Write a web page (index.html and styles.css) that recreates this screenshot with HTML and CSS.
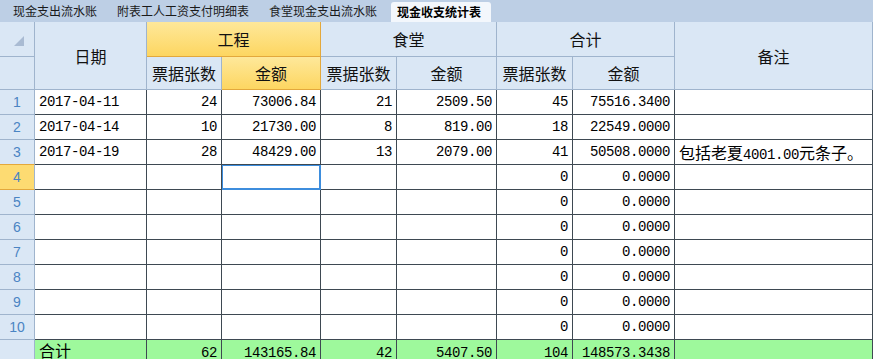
FILE: index.html
```html
<!DOCTYPE html>
<html lang="zh">
<head>
<meta charset="utf-8">
<title>现金收支统计表</title>
<link rel="stylesheet" href="styles.css">
</head>
<body>
<div class="tabs">
  <div class="tab">现金支出流水账</div>
  <div class="tab">附表工人工资支付明细表</div>
  <div class="tab">食堂现金支出流水账</div>
  <div class="tab active">现金收支统计表</div>
</div>
<table class="grid">
  <colgroup>
    <col class="c-rh"><col class="c-date"><col class="c-n1"><col class="c-a1"><col class="c-n2"><col class="c-a2"><col class="c-n3"><col class="c-a3"><col class="c-note">
  </colgroup>
  <thead>
    <tr class="h1">
      <th class="rh corner"><span class="tri"></span></th>
      <th class="hd" rowspan="2">日期</th>
      <th class="hd sel" colspan="2">工程</th>
      <th class="hd" colspan="2">食堂</th>
      <th class="hd" colspan="2">合计</th>
      <th class="hd last" rowspan="2">备注</th>
    </tr>
    <tr class="h2">
      <th class="rh"></th>
      <th class="hd">票据张数</th>
      <th class="hd sel">金额</th>
      <th class="hd">票据张数</th>
      <th class="hd">金额</th>
      <th class="hd">票据张数</th>
      <th class="hd">金额</th>
    </tr>
  </thead>
  <tbody>
    <tr><th class="rh">1</th><td class="t">2017-04-11</td><td class="n">24</td><td class="n a">73006.84</td><td class="n">21</td><td class="n">2509.50</td><td class="n">45</td><td class="n">75516.3400</td><td></td></tr>
    <tr><th class="rh">2</th><td class="t">2017-04-14</td><td class="n">10</td><td class="n a">21730.00</td><td class="n">8</td><td class="n">819.00</td><td class="n">18</td><td class="n">22549.0000</td><td></td></tr>
    <tr><th class="rh">3</th><td class="t">2017-04-19</td><td class="n">28</td><td class="n a">48429.00</td><td class="n">13</td><td class="n">2079.00</td><td class="n">41</td><td class="n">50508.0000</td><td class="t note">包括老夏<span class="mono">4001.00</span>元条子。</td></tr>
    <tr><th class="rh cur">4</th><td></td><td></td><td class="active-cell"></td><td></td><td></td><td class="n">0</td><td class="n">0.0000</td><td></td></tr>
    <tr><th class="rh">5</th><td></td><td></td><td></td><td></td><td></td><td class="n">0</td><td class="n">0.0000</td><td></td></tr>
    <tr><th class="rh">6</th><td></td><td></td><td></td><td></td><td></td><td class="n">0</td><td class="n">0.0000</td><td></td></tr>
    <tr><th class="rh">7</th><td></td><td></td><td></td><td></td><td></td><td class="n">0</td><td class="n">0.0000</td><td></td></tr>
    <tr><th class="rh">8</th><td></td><td></td><td></td><td></td><td></td><td class="n">0</td><td class="n">0.0000</td><td></td></tr>
    <tr><th class="rh">9</th><td></td><td></td><td></td><td></td><td></td><td class="n">0</td><td class="n">0.0000</td><td></td></tr>
    <tr><th class="rh">10</th><td></td><td></td><td></td><td></td><td></td><td class="n">0</td><td class="n">0.0000</td><td></td></tr>
    <tr class="total"><th class="rh"></th><td class="t cjk">合计</td><td class="n">62</td><td class="n a">143165.84</td><td class="n">42</td><td class="n">5407.50</td><td class="n">104</td><td class="n">148573.3438</td><td></td></tr>
  </tbody>
</table>
</body>
</html>
```

FILE: styles.css
```css
* { box-sizing: border-box; }
html, body {
  margin: 0;
  padding: 0;
  background: #ffffff;
  width: 873px;
  height: 359px;
  overflow: hidden;
  font-family: "Noto Sans CJK SC", "Liberation Sans", sans-serif;
}

.tabs {
  display: flex;
  align-items: flex-end;
  height: 22px;
  padding-left: 3px;
  background: #bdcfe5;
}
.tab {
  height: 22px;
  padding: 0 10px;
  font-size: 12px;
  line-height: 22px;
  color: #1a1a1a;
  white-space: nowrap;
}
.tab.active {
  height: 20px;
  line-height: 20px;
  margin-left: 4px;
  padding: 0 10px 0 6px;
  background: #f3f7fc;
  border-radius: 3px 3px 0 0;
  font-weight: bold;
  color: #000;
}

.grid {
  border-collapse: separate;
  border-spacing: 0;
  table-layout: fixed;
  width: 873px;
}
.c-rh { width: 35px; }
.c-date { width: 112px; }
.c-n1 { width: 75px; }
.c-a1 { width: 99px; }
.c-n2 { width: 76px; }
.c-a2 { width: 100px; }
.c-n3 { width: 76px; }
.c-a3 { width: 102px; }
.c-note { width: 198px; }

.grid th, .grid td {
  padding: 0;
  border-right: 1px solid #3e4952;
  border-bottom: 1px solid #3e4952;
  overflow: hidden;
  white-space: nowrap;
}

.h1 th { height: 35px; }
.h2 th { height: 33px; }
.grid thead th {
  background: #dae7f5;
  border-right-color: #9fb4cd;
  border-bottom-color: #9fb4cd;
  font-weight: normal;
  font-size: 16px;
  color: #111;
  text-align: center;
  vertical-align: middle;
}
.grid thead th.sel {
  background: linear-gradient(#fee89a, #fdd661);
  border-right-color: #e3a83c;
  border-bottom-color: #e3a83c;
}
.grid thead th.last { border-right-color: #9fb4cd; }

.corner { position: relative; }
.tri {
  position: absolute;
  right: 10px;
  bottom: 10px;
  width: 0;
  height: 0;
  border-left: 10px solid transparent;
  border-bottom: 10px solid #a9bbd3;
}

.grid tbody tr { height: 25px; }
.grid tbody td {
  height: 25px;
  font-family: "Liberation Mono", "DejaVu Sans Mono", monospace;
  font-size: 14px;
  letter-spacing: -0.4px;
  color: #000;
  vertical-align: middle;
}
.grid tbody th.rh {
  background: #dae7f5;
  border-right-color: #9fb4cd;
  border-bottom-color: #9fb4cd;
  font-family: "Liberation Sans", sans-serif;
  font-weight: normal;
  font-size: 14px;
  color: #4a84c3;
  text-align: center;
}
.grid tbody th.rh.cur {
  background: #fddb72;
  border-bottom-color: #e3a83c;
}
.grid tbody tr:nth-child(3) th.rh { border-bottom-color: #e3a83c; }

.grid tbody td.t { text-align: left; padding-left: 4px; }
.grid tbody td.n { text-align: right; padding-right: 4px; }
.grid tbody td.note {
  font-family: "Noto Sans CJK SC", sans-serif;
  font-size: 16px;
  letter-spacing: 0;
  padding-left: 4px;
}
.grid tbody td.note .mono {
  font-family: "Liberation Mono", monospace;
  font-size: 14px;
  letter-spacing: -0.4px;
}
.grid tbody td.cjk {
  font-family: "Noto Sans CJK SC", sans-serif;
  font-size: 16px;
  letter-spacing: 0;
}
.grid tbody td.active-cell {
  box-shadow: inset 0 0 0 1px #3d8ddd, inset 0 0 0 2px #ffffff;
  border-right-color: #3d8ddd;
  border-bottom-color: #3d8ddd;
}

.grid tbody .total td {
  background: #9ef99c;
  vertical-align: baseline;
  line-height: 20px;
  padding-top: 0;
}
.grid tbody .total th.rh { background: #dae7f5; }
```
